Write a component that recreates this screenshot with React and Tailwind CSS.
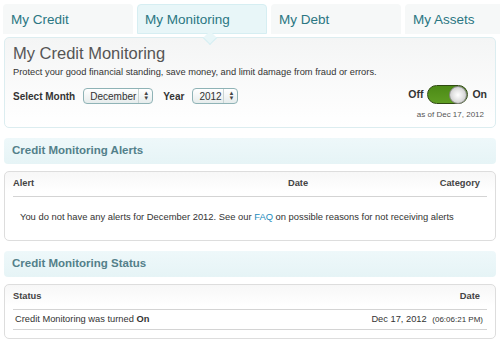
import React from "react";

const tabs = ["My Credit", "My Monitoring", "My Debt", "My Assets"];

const Tab = ({ label, active }) => (
  <div
    className={
      active
        ? "relative h-[30px] w-[130px] shrink-0 rounded-t-[4px] border border-[#d6eef2] bg-[#e8f6f8] pl-[7px] pt-[5px] text-[13.5px] text-[#2a7682]"
        : "h-[30px] w-[130px] shrink-0 rounded-t-[4px] bg-[#f6f8f8] pl-[8px] pt-[6px] text-[13.5px] text-[#2a7682]"
    }
  >
    {label}
    {active && (
      <div className="absolute left-[67px] top-[28px] h-[10px] w-[10px] rotate-45 border-b border-r border-[#d6eef2] bg-[#e8f6f8]" />
    )}
  </div>
);

const Select = ({ value, width }) => (
  <div
    className={`flex h-[16px] ${width} items-center justify-between rounded-[4px] border border-[#8fb3b6] bg-gradient-to-b from-white to-[#e6ecec] pl-[6px] pr-[3px] text-[10px] font-normal text-[#333]`}
  >
    <span>{value}</span>
    <span className="flex h-full items-center border-l border-[#c9d4d4] pl-[4px] text-[6px] leading-[5px] text-[#444]">
      <span className="flex flex-col">
        <span>▲</span>
        <span>▼</span>
      </span>
    </span>
  </div>
);

const SectionHeader = ({ children }) => (
  <div className="mx-[4px] flex h-[26px] items-center rounded-[4px] bg-gradient-to-b from-[#eef8fa] to-[#e6f4f6] pl-[8px] text-[11.5px] font-bold text-[#53808a]">
    {children}
  </div>
);

export default function App() {
  return (
    <div
      className="h-[341px] w-[500px] overflow-hidden bg-white"
      style={{ fontFamily: '"Liberation Sans", Arial, sans-serif' }}
    >
      <div className="flex gap-[4px] pl-[3px] pt-[4px]">
        {tabs.map((t, i) => (
          <Tab key={t} label={t} active={i === 1} />
        ))}
      </div>

      <div className="mx-[4px] mt-[3px] h-[91px] rounded-[5px] border border-[#dcedf0] bg-gradient-to-b from-[#f4f5f5] to-white px-[8px] pt-[5px]">
        <div className="text-[16.5px] leading-[20px] text-[#555]">My Credit Monitoring</div>
        <div className="mt-[3px] text-[9.3px] leading-[12px] text-[#333]">
          Protect your good financial standing, save money, and limit damage from fraud or errors.
        </div>
        <div className="flex items-start justify-between">
          <div className="mt-[10px] flex items-center text-[10px] font-bold text-[#333]">
            <span className="mr-[8px]">Select Month</span>
            <Select value="December" width="w-[70px]" />
            <span className="ml-[10px] mr-[8px]">Year</span>
            <Select value="2012" width="w-[46px]" />
          </div>
          <div className="mt-[7px] flex flex-col items-end">
            <div className="flex items-center text-[10.5px] font-bold text-[#333]">
              <span>Off</span>
              <div className="ml-[4px] mr-[4px] flex h-[19px] w-[41px] items-center justify-end rounded-full border-[1.5px] border-[#2f4a12] bg-gradient-to-b from-[#4c8a16] to-[#5e9d22]">
                <div className="h-[18px] w-[18px] rounded-full border border-[#888] bg-[radial-gradient(circle_at_50%_50%,#ffffff_0%,#e4e4e4_45%,#b9b9b9_100%)]" />
              </div>
              <span>On</span>
            </div>
            <div className="mr-[3px] mt-[5px] text-[8px] text-[#555]">as of Dec 17, 2012</div>
          </div>
        </div>
      </div>

      <div className="mt-[10px]">
        <SectionHeader>Credit Monitoring Alerts</SectionHeader>
      </div>

      <div className="mx-[4px] mt-[7px] h-[70px] rounded-[5px] border border-[#ddd] bg-gradient-to-b from-[#f7f7f7] to-white to-[30%] pl-[8px] pr-[8px]">
        <div className="grid h-[25px] grid-cols-[250px_70px_1fr] items-center border-b border-[#d4d4d4] pr-[7px] text-[9.3px] font-bold text-[#444]">
          <span>Alert</span>
          <span className="text-center">Date</span>
          <span className="text-right">Category</span>
        </div>
        <div className="pl-[7px] pt-[13px] text-[9.4px] text-[#333]">
          You do not have any alerts for December 2012. See our{" "}
          <span className="text-[#1a8bbd]">FAQ</span> on possible reasons for not receiving alerts
        </div>
      </div>

      <div className="mt-[10px]">
        <SectionHeader>Credit Monitoring Status</SectionHeader>
      </div>

      <div className="mx-[4px] mt-[7px] h-[55px] rounded-[5px] border border-[#ddd] bg-gradient-to-b from-[#f7f7f7] to-white to-[40%] px-[8px]">
        <div className="flex h-[25px] items-center justify-between border-b border-[#d4d4d4] pr-[7px] text-[9.3px] font-bold text-[#444]">
          <span>Status</span>
          <span>Date</span>
        </div>
        <div className="flex h-[20px] items-center justify-between border-b border-[#d4d4d4] pl-[2px] pr-[4px] text-[9.3px] text-[#333]">
          <span>
            Credit Monitoring was turned <b className="text-[#333]">On</b>
          </span>
          <span>
            Dec 17, 2012 <span className="ml-[3px] text-[8px]">(06:06:21 PM)</span>
          </span>
        </div>
      </div>
    </div>
  );
}
